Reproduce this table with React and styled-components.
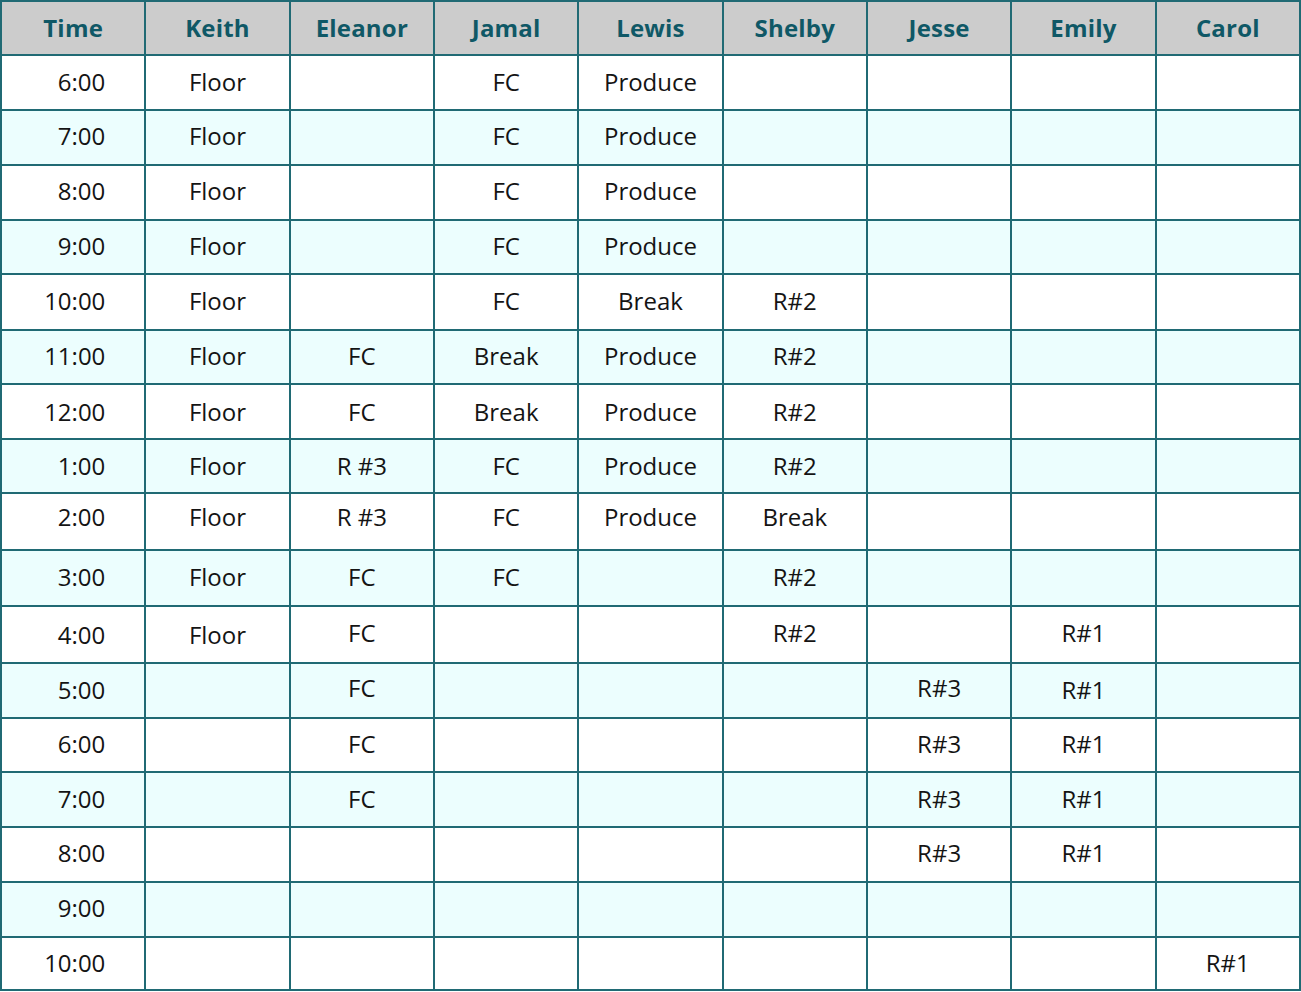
import React from "react";
import styled, { createGlobalStyle } from "styled-components";

const GlobalStyle = createGlobalStyle`
  * {
    box-sizing: border-box;
    margin: 0;
    padding: 0;
  }
  body {
    background: #ffffff;
    font-family: "Open Sans", "Noto Sans", sans-serif;
  }
`;

const line = "#206a74";

const Table = styled.table`
  width: 1301px;
  table-layout: fixed;
  border-collapse: separate;
  border-spacing: 0;
  border-top: 2px solid ${line};
  border-left: 2px solid ${line};
`;

const HeadCell = styled.th`
  height: 54px;
  padding-bottom: 2px;
  background: #cccccc;
  color: #0f5866;
  font-size: 24px;
  font-weight: 700;
  letter-spacing: 0.2px;
  text-align: center;
  vertical-align: middle;
  border-right: 2px solid ${line};
  border-bottom: 2px solid ${line};
`;

const Row = styled.tr`
  background: ${(props) => (props.shaded ? "#ecfefe" : "#ffffff")};
`;

const Cell = styled.td`
  height: ${(props) => props.h}px;
  color: #141414;
  font-size: 24px;
  text-align: ${(props) => (props.time ? "right" : "center")};
  padding-right: ${(props) => (props.time ? "39px" : "0")};
  padding-bottom: ${(props) => props.lift || 0}px;
  vertical-align: middle;
  border-right: 2px solid ${line};
  border-bottom: 2px solid ${line};
`;

const people = ["Keith", "Eleanor", "Jamal", "Lewis", "Shelby", "Jesse", "Emily", "Carol"];

const schedule = [
  { time: "6:00", h: 55, lift: 2, cells: ["Floor", "", "FC", "Produce"] },
  { time: "7:00", h: 55, lift: 4, cells: ["Floor", "", "FC", "Produce"] },
  { time: "8:00", h: 55, lift: 4, cells: ["Floor", "", "FC", "Produce"] },
  { time: "9:00", h: 54, lift: 4, cells: ["Floor", "", "FC", "Produce"] },
  { time: "10:00", h: 56, lift: 4, cells: ["Floor", "", "FC", "Break", "R#2"] },
  { time: "11:00", h: 54, lift: 4, cells: ["Floor", "FC", "Break", "Produce", "R#2"] },
  { time: "12:00", h: 55, lift: 0, cells: ["Floor", "FC", "Break", "Produce", "R#2"] },
  { time: "1:00", h: 54, lift: 2, cells: ["Floor", "R #3", "FC", "Produce", "R#2"] },
  { time: "2:00", h: 57, lift: 10, cells: ["Floor", "R #3", "FC", "Produce", "Break"] },
  { time: "3:00", h: 56, lift: 4, cells: ["Floor", "FC", "FC", "", "R#2"] },
  { time: "4:00", h: 57, lift: 0, cells: ["Floor", "FC", "", "", "R#2", "", "R#1"], up: [1, 4, 6] },
  { time: "5:00", h: 55, lift: 2, cells: ["", "FC", "", "", "", "R#3", "R#1"], up: [1, 5] },
  { time: "6:00", h: 54, lift: 4, cells: ["", "FC", "", "", "", "R#3", "R#1"] },
  { time: "7:00", h: 55, lift: 2, cells: ["", "FC", "", "", "", "R#3", "R#1"] },
  { time: "8:00", h: 55, lift: 4, cells: ["", "", "", "", "", "R#3", "R#1"] },
  { time: "9:00", h: 55, lift: 4, cells: [] },
  { time: "10:00", h: 53, lift: 2, cells: ["", "", "", "", "", "", "", "R#1"] },
];

export default function App() {
  return (
    <>
      <GlobalStyle />
      <Table>
        <thead>
          <tr>
            <HeadCell>Time</HeadCell>
            {people.map((name) => (
              <HeadCell key={name}>{name}</HeadCell>
            ))}
          </tr>
        </thead>
        <tbody>
          {schedule.map((row, i) => (
            <Row key={i} shaded={i % 2 === 1}>
              <Cell time h={row.h} lift={row.lift}>
                {row.time}
              </Cell>
              {people.map((name, j) => (
                <Cell
                  key={name}
                  h={row.h}
                  lift={row.lift + (row.up && row.up.includes(j) ? 5 : 0)}
                >
                  {row.cells[j] || ""}
                </Cell>
              ))}
            </Row>
          ))}
        </tbody>
      </Table>
    </>
  );
}
